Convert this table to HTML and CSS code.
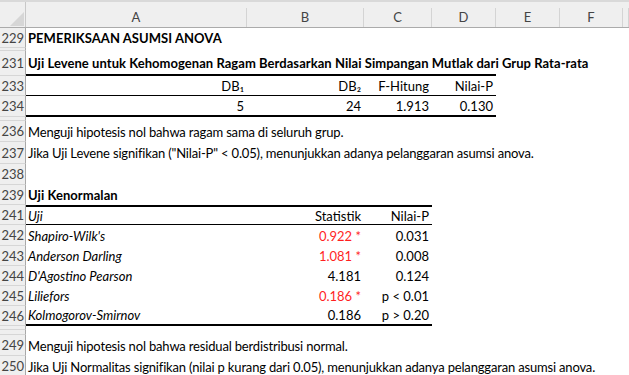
FILE: index.html
```html
<!DOCTYPE html>
<html lang="id">
<head>
<meta charset="utf-8">
<title>Pemeriksaan Asumsi Anova</title>
<link rel="stylesheet" href="styles.css">
</head>
<body>
<div class="sheet">
  <div class="hdr">
    <div class="corner"><span class="tri"></span></div>
    <div class="ch">A</div>
    <div class="ch">B</div>
    <div class="ch">C</div>
    <div class="ch">D</div>
    <div class="ch">E</div>
    <div class="ch">F</div>
    <div class="ch"></div>
  </div>

  <div class="row h20"><div class="rn">229</div><div class="c b">PEMERIKSAAN ASUMSI ANOVA</div></div>
  <div class="row h3"><div class="rn"></div></div>
  <div class="row h25"><div class="rn">231</div><div class="c b bb2">Uji Levene untuk Kehomogenan Ragam Berdasarkan Nilai Simpangan Mutlak dari Grup Rata-rata</div><div class="c bb2"></div><div class="c bb2"></div><div class="c bb2"></div></div>
  <div class="row h20"><div class="rn">233</div><div class="c r bb1">DB₁</div><div class="c r bb1">DB₂</div><div class="c r bb1">F-Hitung</div><div class="c r bb1">Nilai-P</div></div>
  <div class="row h21"><div class="rn">234</div><div class="c r bb2">5</div><div class="c r bb2">24</div><div class="c r bb2">1.913</div><div class="c r bb2">0.130</div></div>
  <div class="row h4"><div class="rn"></div></div>
  <div class="row h21"><div class="rn">236</div><div class="c t">Menguji hipotesis nol bahwa ragam sama di seluruh grup.</div></div>
  <div class="row h22"><div class="rn">237</div><div class="c t">Jika Uji Levene signifikan ("Nilai-P" &lt; 0.05), menunjukkan adanya pelanggaran asumsi anova.</div></div>
  <div class="row h21"><div class="rn">238</div></div>
  <div class="row h20"><div class="rn">239</div><div class="c b">Uji Kenormalan</div></div>
  <div class="row h20"><div class="rn">241</div><div class="c i bt2 bb1">Uji</div><div class="c r bt2 bb1">Statistik</div><div class="c r bt2 bb1">Nilai-P</div></div>
  <div class="row h21"><div class="rn">242</div><div class="c i">Shapiro-Wilk's</div><div class="c r red">0.922 *</div><div class="c r">0.031</div></div>
  <div class="row h20"><div class="rn">243</div><div class="c i">Anderson Darling</div><div class="c r red">1.081 *</div><div class="c r">0.008</div></div>
  <div class="row h20"><div class="rn">244</div><div class="c i">D'Agostino Pearson</div><div class="c r">4.181</div><div class="c r">0.124</div></div>
  <div class="row h20"><div class="rn">245</div><div class="c i">Liliefors</div><div class="c r red">0.186 *</div><div class="c r">p &lt; 0.01</div></div>
  <div class="row h20"><div class="rn">246</div><div class="c i bb2">Kolmogorov-Smirnov</div><div class="c r bb2">0.186</div><div class="c r bb2">p &gt; 0.20</div></div>
  <div class="row h4"><div class="rn"></div></div>
  <div class="row h5"><div class="rn"></div></div>
  <div class="row h21"><div class="rn">249</div><div class="c t">Menguji hipotesis nol bahwa residual berdistribusi normal.</div></div>
  <div class="row h21"><div class="rn">250</div><div class="c t">Jika Uji Normalitas signifikan (nilai p kurang dari 0.05), menunjukkan adanya pelanggaran asumsi anova.</div></div>
</div>
</body>
</html>
```
FILE: styles.css
```css
html, body {
  margin: 0;
  padding: 0;
  background: #ffffff;
}
body {
  font-family: "Lato", "Open Sans", sans-serif;
  font-size: 13px;
  color: #000;
  overflow: hidden;
}
.sheet {
  width: 629px;
  height: 375px;
  overflow: hidden;
}
.hdr, .row {
  display: grid;
  grid-template-columns: 26px 221px 117px 68px 64px 64px 63px 6px;
}
.hdr {
  height: 28px;
  box-sizing: border-box;
  background: #efefef;
  border-top: 2px solid #d9d9d9;
  border-bottom: 1px solid #ababab;
}
.corner {
  display: flex;
  justify-content: flex-end;
  align-items: flex-end;
  border-right: 1px solid #c8c8c8;
  padding: 0 1px 1px 0;
}
.tri {
  width: 14px;
  height: 14px;
  background: #d6d6d6;
  clip-path: polygon(100% 0, 100% 100%, 0 100%);
}
.ch {
  align-self: end;
  height: 19px;
  box-sizing: border-box;
  border-right: 1px solid #d4d4d4;
  display: flex;
  align-items: center;
  justify-content: center;
  color: #444;
  font-size: 13px;
  padding-bottom: 1px;
}
.row {
  box-sizing: border-box;
}
.h3 { height: 3px; }
.h4 { height: 4px; }
.h5 { height: 5px; }
.h19 { height: 19px; }
.h20 { height: 20px; }
.h21 { height: 21px; }
.h22 { height: 22px; }
.h25 { height: 25px; }
.rn {
  background: #efefef;
  border-right: 1px solid #a9a9a9;
  border-bottom: 1px solid #d6d6d6;
  box-sizing: border-box;
  display: flex;
  align-items: center;
  justify-content: flex-end;
  padding-right: 1px;
  color: #444;
  font-size: 13px;
  overflow: hidden;
}
.c {
  box-sizing: border-box;
  display: flex;
  align-items: center;
  white-space: nowrap;
  min-width: 0;
  padding: 0 3px 0 2px;
}
.t { letter-spacing: -0.17px; }
.r { justify-content: flex-end; }
.b { font-weight: bold; letter-spacing: 0.05px; }
.i { font-style: italic; }
.red { color: #ff1f1f; }
.bb1 { border-bottom: 1px solid #000; }
.bb2 { border-bottom: 2px solid #000; }
.bt2 { border-top: 2px solid #000; }
```
